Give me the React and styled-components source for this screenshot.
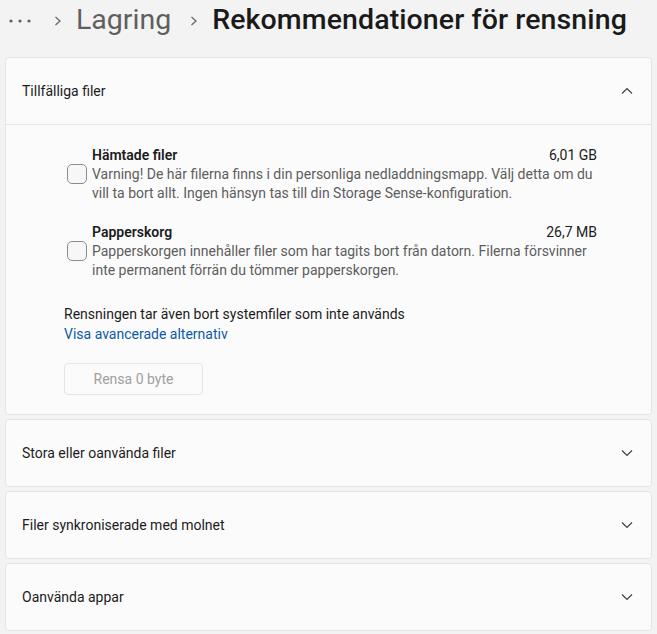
import React from "react";
import styled, { createGlobalStyle } from "styled-components";

const GlobalStyle = createGlobalStyle`
  html, body {
    margin: 0;
    padding: 0;
    background: #f3f3f3;
  }
  body {
    font-family: "Segoe UI", Roboto, "Noto Sans", sans-serif;
    color: #1b1b1b;
  }
`;

const items = [
  {
    title: "Hämtade filer",
    size: "6,01 GB",
    desc: "Varning! De här filerna finns i din personliga nedladdningsmapp. Välj detta om du vill ta bort allt. Ingen hänsyn tas till din Storage Sense-konfiguration.",
  },
  {
    title: "Papperskorg",
    size: "26,7 MB",
    desc: "Papperskorgen innehåller filer som har tagits bort från datorn. Filerna försvinner inte permanent förrän du tömmer papperskorgen.",
  },
];

const sections = [
  "Stora eller oanvända filer",
  "Filer synkroniserade med molnet",
  "Oanvända appar",
];

function Chevron({ up }) {
  return (
    <svg width="12" height="12" viewBox="0 0 12 12">
      <polyline
        points={up ? "1,8.5 6,3.5 11,8.5" : "1,3.5 6,8.5 11,3.5"}
        fill="none"
        stroke="#3c3c3c"
        strokeWidth="1.1"
      />
    </svg>
  );
}

export default function App() {
  return (
    <Page>
      <GlobalStyle />
      <Breadcrumb>
        <Dots viewBox="0 0 22 6">
          <circle cx="2" cy="3" r="1.6" fill="#5f5f5f" />
          <circle cx="11" cy="3" r="1.6" fill="#5f5f5f" />
          <circle cx="20" cy="3" r="1.6" fill="#5f5f5f" />
        </Dots>
        <Crumb $first viewBox="0 0 8 10">
          <polyline points="1.5,1 6,5 1.5,9" fill="none" stroke="#666" strokeWidth="1.3" />
        </Crumb>
        <CrumbText>Lagring</CrumbText>
        <Crumb viewBox="0 0 8 10">
          <polyline points="1.5,1 6,5 1.5,9" fill="none" stroke="#666" strokeWidth="1.3" />
        </Crumb>
        <CrumbText $current>Rekommendationer för rensning</CrumbText>
      </Breadcrumb>

      <Cards>
        <Card>
          <CardHeader>
            <span>Tillfälliga filer</span>
            <Chevron up />
          </CardHeader>
          <CardBody>
            <ItemList>
              {items.map((it) => (
                <Item key={it.title}>
                  <Checkbox />
                  <ItemContent>
                    <TitleRow>
                      <ItemTitle>{it.title}</ItemTitle>
                      <Size>{it.size}</Size>
                    </TitleRow>
                    <Desc>{it.desc}</Desc>
                  </ItemContent>
                </Item>
              ))}
            </ItemList>
            <Note>Rensningen tar även bort systemfiler som inte används</Note>
            <Link href="#">Visa avancerade alternativ</Link>
            <Button disabled>Rensa 0 byte</Button>
          </CardBody>
        </Card>

        {sections.map((s) => (
          <Card key={s}>
            <CardHeader>
              <span>{s}</span>
              <Chevron />
            </CardHeader>
          </Card>
        ))}
      </Cards>
    </Page>
  );
}

const Page = styled.div`
  width: 657px;
  height: 634px;
  box-sizing: border-box;
  padding: 0 5px;
  overflow: hidden;
`;

const Breadcrumb = styled.div`
  height: 40px;
  margin-bottom: 17px;
  display: flex;
  align-items: center;
  padding-left: 4px;
`;

const Dots = styled.svg`
  width: 22px;
  height: 6px;
  margin-top: 1px;
`;

const Crumb = styled.svg`
  width: 8px;
  height: 10px;
  flex: none;
  margin: 1px 14px 0 ${(p) => (p.$first ? "23px" : "19px")};
`;

const CrumbText = styled.span`
  font-size: 28.5px;
  line-height: 40px;
  font-weight: ${(p) => (p.$current ? 500 : 400)};
  letter-spacing: ${(p) => (p.$current ? "0.1px" : "0")};
  color: ${(p) => (p.$current ? "#1a1a1a" : "#5f5f5f")};
  white-space: nowrap;
`;

const Cards = styled.div`
  display: flex;
  flex-direction: column;
  gap: 4px;
`;

const Card = styled.div`
  background: #fbfbfb;
  border: 1px solid #e5e5e5;
  border-radius: 4px;
`;

const CardHeader = styled.div`
  height: 66px;
  display: flex;
  align-items: center;
  justify-content: space-between;
  padding: 0 18px 0 16px;
  font-size: 14px;
  color: #1b1b1b;
`;

const CardBody = styled.div`
  border-top: 1px solid #e5e5e5;
  padding: 20px 54px 19px 58px;
  display: flex;
  flex-direction: column;
  align-items: flex-start;
`;

const ItemList = styled.div`
  display: flex;
  flex-direction: column;
  gap: 19px;
  align-self: stretch;
`;

const Item = styled.div`
  display: flex;
  align-items: center;
  gap: 5px;
  padding-left: 3px;
`;

const Checkbox = styled.div`
  width: 20px;
  height: 20px;
  flex: none;
  box-sizing: border-box;
  border: 1px solid #8d8d8d;
  border-radius: 5px;
  background: #f7f7f7;
`;

const ItemContent = styled.div`
  flex: 1;
  min-width: 0;
`;

const TitleRow = styled.div`
  display: flex;
  justify-content: space-between;
  font-size: 14px;
  line-height: 20px;
`;

const ItemTitle = styled.span`
  font-weight: 600;
  color: #1b1b1b;
`;

const Size = styled.span`
  color: #1b1b1b;
`;

const Desc = styled.div`
  font-size: 14px;
  line-height: 19px;
  color: #5d5d5d;
  padding-right: 4px;
`;

const Note = styled.div`
  margin-top: 24px;
  font-size: 14px;
  line-height: 20px;
  color: #1b1b1b;
`;

const Link = styled.a`
  font-size: 14px;
  line-height: 20px;
  color: #0c5aa6;
  text-decoration: none;
`;

const Button = styled.button`
  margin-top: 19px;
  width: 139px;
  height: 32px;
  box-sizing: border-box;
  border: 1px solid #e5e5e5;
  border-radius: 4px;
  background: #fbfbfb;
  color: #a0a0a0;
  font-family: inherit;
  font-size: 14px;
`;
